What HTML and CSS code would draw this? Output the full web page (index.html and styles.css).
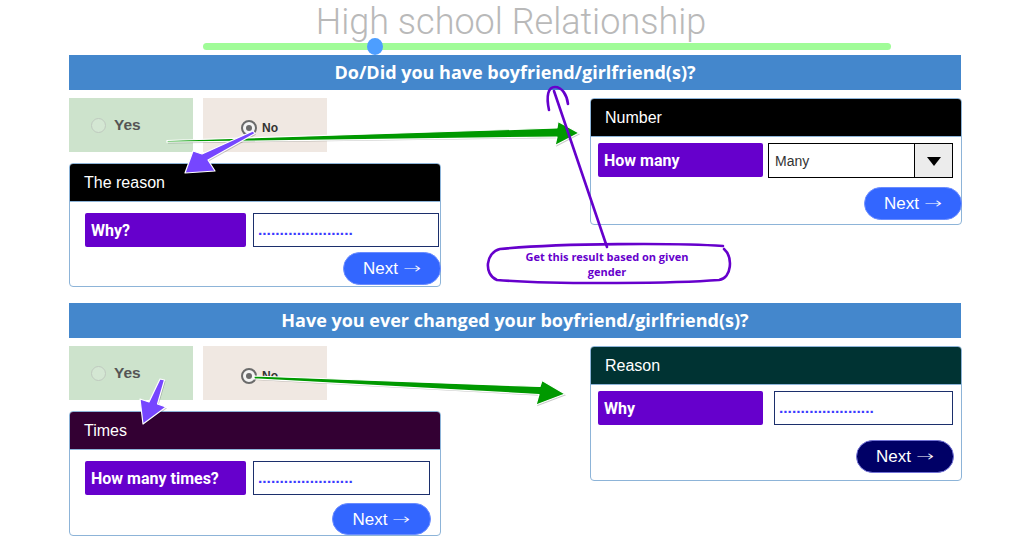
FILE: index.html
```html
<!DOCTYPE html>
<html lang="en">
<head>
<meta charset="utf-8">
<title>High school Relationship</title>
<link rel="stylesheet" href="styles.css">
</head>
<body>
<div class="page">
  <h1 class="title">High school Relationship</h1>
  <div class="progress">
    <div class="track"></div>
    <div class="thumb"></div>
  </div>

  <section class="question">
    <div class="qbar">Do/Did you have boyfriend/girlfriend(s)?</div>
    <div class="qrow">
      <div class="leftcol">
        <div class="choices">
          <div class="choice choice-yes"><span class="radio"></span><span class="choice-text">Yes</span></div>
          <div class="choice choice-no"><span class="radio radio-on"><span class="dot"></span></span><span class="choice-small">No</span></div>
        </div>
        <div class="panel panel-a">
          <div class="panel-head head-black">The reason</div>
          <div class="panel-body body-a">
            <div class="field-row">
              <div class="field-label label-a">Why?</div>
              <div class="field-input input-a">......................</div>
            </div>
            <div class="btn-row"><button class="btn-next btn-a">Next <span class="arr">&#8594;</span></button></div>
          </div>
        </div>
      </div>
      <div class="rightcol">
        <div class="panel panel-b">
          <div class="panel-head head-black">Number</div>
          <div class="panel-body body-b">
            <div class="field-row">
              <div class="field-label label-b">How many</div>
              <div class="select">
                <span class="select-value">Many</span>
                <span class="select-btn"><span class="tri"></span></span>
              </div>
            </div>
            <div class="btn-row"><button class="btn-next btn-b">Next <span class="arr">&#8594;</span></button></div>
          </div>
        </div>
      </div>
    </div>
  </section>

  <section class="question question-2">
    <div class="qbar">Have you ever changed your boyfriend/girlfriend(s)?</div>
    <div class="qrow">
      <div class="leftcol">
        <div class="choices">
          <div class="choice choice-yes"><span class="radio"></span><span class="choice-text">Yes</span></div>
          <div class="choice choice-no"><span class="radio radio-on"><span class="dot"></span></span><span class="choice-small">No</span></div>
        </div>
        <div class="panel panel-c">
          <div class="panel-head head-plum">Times</div>
          <div class="panel-body body-c">
            <div class="field-row">
              <div class="field-label label-a">How many times?</div>
              <div class="field-input input-c">......................</div>
            </div>
            <div class="btn-row"><button class="btn-next btn-c">Next <span class="arr">&#8594;</span></button></div>
          </div>
        </div>
      </div>
      <div class="rightcol">
        <div class="panel panel-d">
          <div class="panel-head head-teal">Reason</div>
          <div class="panel-body body-d">
            <div class="field-row">
              <div class="field-label label-b">Why</div>
              <div class="field-input input-d">......................</div>
            </div>
            <div class="btn-row"><button class="btn-next btn-dark">Next <span class="arr">&#8594;</span></button></div>
          </div>
        </div>
      </div>
    </div>
  </section>

  <svg class="overlay" width="1028" height="545" viewBox="0 0 1028 545">
    <g class="shadow" transform="translate(1,1.2)">
      <polygon points="167,140.5 557,128 558,121.5 579,133 555,145.5 557,137 167,142.2"/>
      <polygon points="254,376 540,386.5 542,380.5 565,394 536,405 539,394.5 254,378.8"/>
      <polygon points="253,131 202,154 193,151 185,173 215,171 208,160 255,133.5"/>
      <polygon points="160,379 164.5,380 157.5,404 166,407 143,424 140,399 149,402"/>
    </g>
    <g class="green">
      <polygon points="167,140.5 557,128 558,121.5 579,133 555,145.5 557,137 167,142.2"/>
      <polygon points="254,376 540,386.5 542,380.5 565,394 536,405 539,394.5 254,378.8"/>
    </g>
    <g class="violet">
      <polygon points="253,131 202,154 193,151 185,173 215,171 208,160 255,133.5"/>
      <polygon points="160,379 164.5,380 157.5,404 166,407 143,424 140,399 149,402"/>
    </g>
    <g class="ink">
      <path d="M549 110 C546 96 548 87 555 87 C562 87 567 95 568 104"/>
      <path d="M554 91 L607 247"/>
      <path d="M723 246 C680 243 560 243 500 249 C486 252 483 274 497 280 C560 285 680 283 719 280 C732 278 733 257 724 249"/>
    </g>
  </svg>
  <div class="note">Get this result based on given<br>gender</div>
</div>
</body>
</html>
```

FILE: styles.css
```css
* { box-sizing: border-box; }

body {
  margin: 0;
  background: #ffffff;
  font-family: "Liberation Sans", Arial, sans-serif;
}

.page {
  position: relative;
  width: 1028px;
  height: 545px;
  overflow: hidden;
  padding-left: 69px;
}

.title {
  margin: 0;
  width: 884px;
  height: 41px;
  font-family: Roboto, sans-serif;
  font-weight: 300;
  font-size: 36px;
  line-height: 45px;
  color: #b9b9b9;
  text-align: center;
  white-space: nowrap;
}

.progress {
  position: relative;
  width: 688px;
  height: 14px;
  margin-left: 134px;
  padding-top: 2px;
}

.track {
  height: 7px;
  border-radius: 4px;
  background: #a0fc98;
}

.thumb {
  position: absolute;
  left: 164px;
  top: -3px;
  width: 16px;
  height: 17px;
  border-radius: 50%;
  background: #4d9eff;
}

.qbar {
  width: 892px;
  height: 35px;
  background: #4487cc;
  color: #ffffff;
  font-family: "Open Sans", sans-serif;
  font-weight: 700;
  font-size: 18px;
  line-height: 35px;
  text-align: center;
  white-space: nowrap;
}

.question-2 { margin-top: 16px; }

.qrow {
  display: flex;
  justify-content: space-between;
  align-items: flex-start;
  width: 893px;
  margin-top: 8px;
}

.leftcol { width: 372px; }
.rightcol { width: 372px; }

.choices {
  display: flex;
  gap: 10px;
  height: 54px;
  margin-bottom: 11px;
}

.choice {
  width: 124px;
  height: 54px;
  display: flex;
  align-items: center;
}

.choice-yes {
  background: #cde3cc;
  padding-left: 22px;
  gap: 8px;
}

.choice-no {
  background: #f0e8e2;
  padding-left: 38px;
  padding-top: 6px;
  gap: 5px;
}

.radio {
  display: block;
  width: 15px;
  height: 15px;
  border-radius: 50%;
  border: 1px solid #bfcabf;
  background: #d4e7d3;
  flex: none;
}

.radio-on {
  width: 16px;
  height: 16px;
  border: 2px solid #6b6b6b;
  background: #f4f4f4;
  display: flex;
  align-items: center;
  justify-content: center;
}

.dot {
  width: 6px;
  height: 6px;
  border-radius: 50%;
  background: #6b6b6b;
}

.choice-text {
  font-weight: 700;
  font-size: 15.5px;
  color: #555555;
}

.choice-small {
  font-weight: 700;
  font-size: 12px;
  color: #333333;
}

.panel {
  border: 1px solid #8db4d8;
  border-radius: 4px;
  background: #ffffff;
}

.panel-head {
  height: 38px;
  padding-left: 14px;
  border-bottom: 1px solid #8db4d8;
  border-radius: 3px 3px 0 0;
  color: #ffffff;
  font-size: 16px;
  line-height: 37px;
}

.head-black { background: #000000; }
.head-plum { background: #330033; }
.head-teal { background: #003333; }

.field-row {
  display: flex;
  align-items: flex-start;
}

.field-label {
  height: 34px;
  background: #6600cc;
  border-radius: 2px;
  color: #ffffff;
  font-family: Roboto, sans-serif;
  font-weight: 700;
  font-size: 16px;
  line-height: 35px;
  padding-left: 6px;
}

.label-a { width: 161px; }
.label-b { width: 165px; }

.field-input {
  height: 34px;
  border: 1px solid #1c2f6c;
  padding-left: 4px;
  color: #3b3bff;
  font-weight: 700;
  font-size: 15.5px;
  line-height: 32px;
  overflow: hidden;
}

.btn-row {
  display: flex;
  justify-content: flex-end;
}

.btn-next {
  height: 33px;
  width: 98px;
  padding: 0;
  border: 1px solid #6a8cff;
  border-radius: 17px;
  background: #3366ff;
  color: #ffffff;
  font-family: "Liberation Sans", Arial, sans-serif;
  font-size: 17px;
  line-height: 31px;
  text-align: center;
  white-space: nowrap;
}

.arr {
  display: inline-block;
  font-family: "DejaVu Sans", sans-serif;
  font-weight: 200;
  font-size: 17px;
  transform: scale(1.25, 0.85);
  transform-origin: left center;
  margin-right: 4px;
}

.btn-dark {
  background: #000066;
  border-color: #7272d6;
}

/* panel A: The reason */
.body-a { padding: 11px 0 1px 15px; }
.body-a .field-label { margin-right: 7px; }
.input-a { width: 186px; }
.body-a .btn-row { margin-top: 5px; margin-right: -1px; }

/* panel B: Number */
.body-b { padding: 6px 0 4px 7px; }
.body-b .field-label { margin-right: 5px; }
.body-b .btn-row { margin-top: 9px; margin-right: -1px; }

.select {
  display: flex;
  width: 185px;
  height: 35px;
  border: 1px solid #000000;
}

.select-value {
  flex: 1;
  padding-left: 6px;
  font-size: 14px;
  line-height: 35px;
  color: #333333;
}

.select-btn {
  width: 38px;
  border-left: 1px solid #000000;
  background: #ececec;
  display: flex;
  align-items: center;
  justify-content: center;
}

.tri {
  width: 0;
  height: 0;
  border-left: 7px solid transparent;
  border-right: 7px solid transparent;
  border-top: 9px solid #000000;
  margin-top: 1px;
}

/* panel C: Times */
.body-c { padding: 11px 0 0 15px; }
.body-c .field-label { margin-right: 7px; }
.input-c { width: 177px; }
.body-c .btn-row { margin-top: 8px; margin-right: 9px; }
.btn-c { width: 99px; height: 32px; line-height: 30px; }

/* panel D: Reason */
.body-d { padding: 6px 0 7px 7px; }
.body-d .field-label { margin-right: 11px; }
.input-d { width: 179px; }
.body-d .btn-row { margin-top: 15px; margin-right: 7px; }

/* annotations */
.overlay {
  position: absolute;
  left: 0;
  top: 0;
  pointer-events: none;
}

.shadow polygon { fill: rgba(0, 0, 0, 0.22); }

.green polygon {
  fill: #009900;
  stroke: #ffffff;
  stroke-width: 1.2;
  stroke-linejoin: round;
}

.violet polygon {
  fill: #7646ff;
  stroke: #ffffff;
  stroke-width: 1.2;
  stroke-linejoin: round;
}

.ink path {
  fill: none;
  stroke: #6600cc;
  stroke-width: 2.6;
  stroke-linecap: round;
  stroke-linejoin: round;
}

.note {
  position: absolute;
  left: 488px;
  top: 249px;
  width: 238px;
  color: #6600cc;
  font-family: "Open Sans", sans-serif;
  font-weight: 700;
  font-size: 11px;
  line-height: 15px;
  text-align: center;
}
```
